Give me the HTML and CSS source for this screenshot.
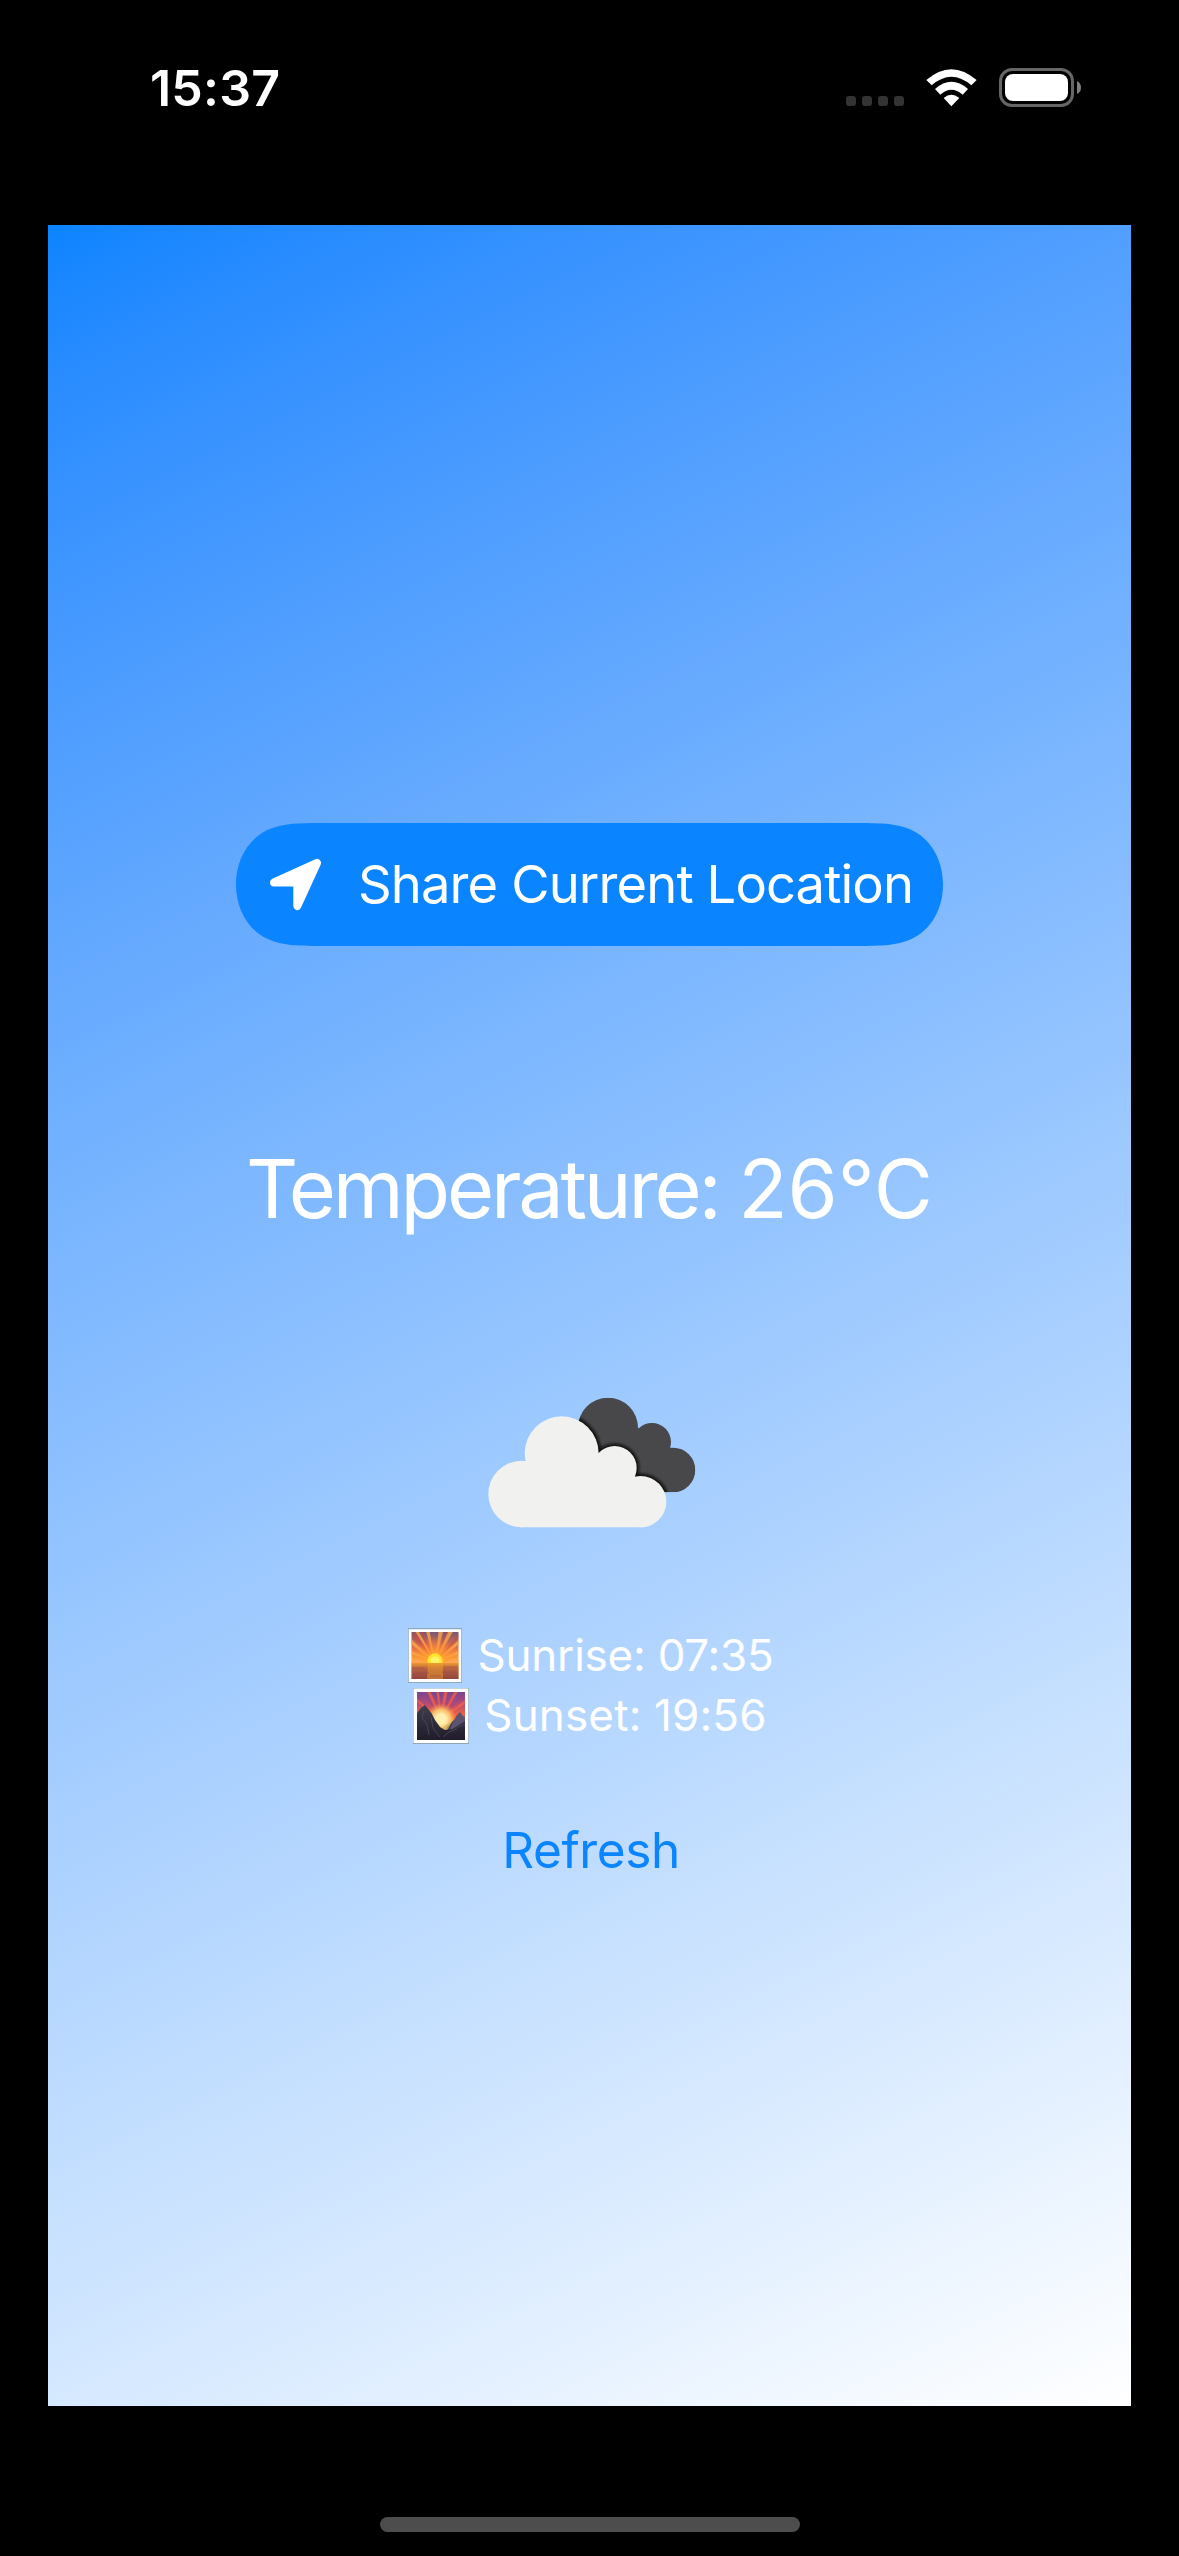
FILE: index.html
```html
<!DOCTYPE html>
<html lang="en">
<head>
<meta charset="utf-8">
<title>Weather</title>
<link rel="stylesheet" href="styles.css">
</head>
<body>
<header class="status">
  <span class="clock">15:37</span>
  <div class="indicators">
    <div class="signal"><i></i><i></i><i></i><i></i></div>
    <svg class="wifi" width="52" height="38" viewBox="318 56 156 114" fill="#fff">
      <path d="M319 89Q394 24 470 89L454 105Q394 54 335 105ZM345 116Q394 73 444 116L428 133Q394 104 361 133ZM371 143Q394 123 418 143L394 168Z"/>
    </svg>
    <svg class="battery" width="83" height="39" viewBox="0 0 83 39">
      <rect x="1.5" y="1.5" width="72" height="36" rx="11.5" fill="none" stroke="#666" stroke-width="3"/>
      <rect x="6" y="6" width="63" height="27" rx="8" fill="#fff"/>
      <path d="M78 13Q82 15 82 19.500Q82 24 78 26Z" fill="#808080"/>
    </svg>
  </div>
</header>

<main class="card">
  <button class="share">
    <svg class="arrow" width="54" height="54" viewBox="0 0 54 54">
      <path d="M5 24.500L48 5L28.300 48V24.500Z" fill="#fff" stroke="#fff" stroke-width="8" stroke-linejoin="round"/>
    </svg>
    <span class="share-label">Share Current Location</span>
  </button>

  <h1 class="temperature">Temperature: <span class="degrees">26°C</span></h1>

  <svg class="clouds" width="208" height="131" viewBox="54 50 624 393">
    <defs>
      <clipPath id="back">
        <circle cx="414" cy="142" r="90"/><circle cx="546" cy="185" r="57"/><circle cx="609" cy="269" r="67"/>
        <path d="M340 150L500 140L600 205V336H450Z"/>
      </clipPath>
      <filter id="soft" x="-10%" y="-10%" width="120%" height="120%"><feGaussianBlur stdDeviation="4"/></filter>
      <g id="front">
        <circle cx="155" cy="341" r="100"/><circle cx="275" cy="219" r="111"/>
        <circle cx="434" cy="263" r="66"/><circle cx="512" cy="364" r="77"/>
        <path d="M150 250H380L520 310V441H150Z"/>
      </g>
    </defs>
    <g clip-path="url(#back)">
      <path d="M300 40H690V350H300Z" fill="#48484a"/>
      <use href="#front" fill="#111" stroke="#111" stroke-width="14" filter="url(#soft)"/>
    </g>
    <use href="#front" fill="#f1f2f0"/>
  </svg>

  <div class="sun-times">
    <p class="sun-row sunrise">
      <svg width="54" height="55" viewBox="0 0 54 55">
        <defs>
          <linearGradient id="rise" x2="0" y2="1"><stop stop-color="#795772"/><stop offset=".35" stop-color="#e87343"/><stop offset=".65" stop-color="#ffb52e"/></linearGradient>
          <linearGradient id="sea" x2="0" y2="1"><stop stop-color="#ee9a2c"/><stop offset=".35" stop-color="#b76244"/><stop offset="1" stop-color="#93453d"/></linearGradient>
          <radialGradient id="glow"><stop stop-color="#ffe93a"/><stop offset=".4" stop-color="#ff9d32" stop-opacity=".75"/><stop offset="1" stop-color="#ff8038" stop-opacity="0"/></radialGradient>
          <clipPath id="sky"><path d="M3.500 4H50.500V36H3.500Z"/></clipPath>
        </defs>
        <path d="M0 0H54V55H0Z" fill="#8ba9bf"/><path d="M.7 1.200H53.200V54H.7Z" fill="#fff"/>
        <path d="M3.500 4H50.500V51H3.500Z" fill="url(#rise)"/>
        <g clip-path="url(#sky)">
          <path d="M27 34L0 14V8ZM27 34L6 2H10ZM27 34L17 0H21ZM27 34L31 0H36ZM27 34L41 2H46ZM27 34L54 9V14ZM27 34L0 25V21ZM27 34L54 21V25Z" fill="#ffac4b" opacity=".75"/>
          <path d="M27 34L4 8L7 4ZM27 34L12 3H15ZM27 34L38 3H40ZM27 34L51 6V9Z" fill="#d54440" opacity=".55"/>
          <circle cx="27" cy="33" r="24" fill="url(#glow)"/>
          <circle cx="27" cy="33" r="7.500" fill="#ffe529"/><circle cx="27" cy="33" r="4.500" fill="#fff36a"/>
          <path d="M3 33Q8 30 12 32L20 35H3ZM51 32Q46 29 42 32L34 35H51Z" fill="#ffa354"/>
        </g>
        <path d="M3.500 35H50.500V51H3.500Z" fill="url(#sea)"/>
        <path d="M20 35H35V51H19Z" fill="#f5a329" opacity=".45"/>
        <path d="M4 40H16M36 39H50M7 45H21M34 44H47M22 48H33" stroke="#8b4348" stroke-width=".7" opacity=".6"/>
      </svg>
      <span class="sun-label">Sunrise: 07:35</span>
    </p>
    <p class="sun-row sunset">
      <svg width="56" height="56" viewBox="0 0 56 56">
        <defs>
          <linearGradient id="dusk" x2="0" y2="1"><stop stop-color="#754594"/><stop offset=".25" stop-color="#b54c75"/><stop offset=".5" stop-color="#f4653d"/><stop offset="1" stop-color="#ffa33c"/></linearGradient>
          <radialGradient id="halo"><stop offset=".3" stop-color="#fff0b2"/><stop offset=".6" stop-color="#ffd071" stop-opacity=".85"/><stop offset="1" stop-color="#ff8738" stop-opacity="0"/></radialGradient>
          <linearGradient id="rock" x2="0" y2="1"><stop stop-color="#403e4d"/><stop offset="1" stop-color="#201c2a"/></linearGradient>
          <clipPath id="view"><path d="M4 4H52V52H4Z"/></clipPath>
        </defs>
        <path d="M0 0H56V56H0Z" fill="#91a5b8"/><path d="M.5 .5H55.300V55H.5Z" fill="#fff"/>
        <g clip-path="url(#view)">
          <path d="M4 4H52V52H4Z" fill="url(#dusk)"/>
          <path d="M28 31L14 4H18ZM28 31L23 2H26ZM28 31L31 3H35ZM28 31L42 2H46ZM28 31L4 14V11ZM28 31L52 12V16Z" fill="#ff633e" opacity=".7"/>
          <path d="M28 31L36 4H39ZM28 31L47 5L50 8ZM28 31L9 4H12Z" fill="#954384" opacity=".4"/>
          <circle cx="28" cy="31" r="16" fill="url(#halo)"/>
          <path d="M34 42L38 36L41 32L44 27L47 24L50 28L52 29V52H30Z" fill="#5a5471"/>
          <path d="M34 39L41 32L36 43L52 33V52H28Z" fill="#3b354a"/>
          <path d="M30 39L40 32L34 43L28 43Z" fill="#d3b86c" opacity=".75"/>
          <path d="M4 25L8 20L12 17L16 22L19 26L22 32L27 39L32 42L40 41L52 38V52H4Z" fill="url(#rock)"/>
          <path d="M11 23L9 30L14 36L16 47M18 29L20 40L27 49M44 41L36 44L30 49" fill="none" stroke="#565160" stroke-width="1" opacity=".7"/>
        </g>
      </svg>
      <span class="sun-label">Sunset: 19:56</span>
    </p>
  </div>

  <a class="refresh">Refresh</a>
</main>

<footer class="home"><div class="home-bar"></div></footer>
</body>
</html>
```

FILE: styles.css
```css
* { box-sizing: border-box; }

body {
  margin: 0;
  height: 2556px;
  overflow: hidden;
  background: #000;
  color: #fff;
  font-family: Inter, "Liberation Sans", sans-serif;
}

.status {
  display: flex;
  justify-content: space-between;
  align-items: flex-start;
  height: 225px;
  padding: 58px 97px 0 150px;
}

.clock {
  font-size: 50px;
  font-weight: 600;
  line-height: 60px;
  letter-spacing: 0.2px;
}

.indicators {
  display: flex;
  align-items: flex-end;
  padding-top: 10px;
}

.signal {
  display: flex;
  gap: 6px;
  margin: 0 22px 1px 0;
}

.signal i {
  width: 10px;
  height: 10px;
  border-radius: 3px;
  background: #333;
}

.wifi { margin-right: 21px; }

.card {
  display: flex;
  flex-direction: column;
  align-items: center;
  width: 1083px;
  height: 2181px;
  margin-left: 48px;
  padding-top: 598px;
  background: linear-gradient(153.6deg in oklab, #0a84ff, #fff);
}

.share {
  display: flex;
  align-items: center;
  width: 707px;
  height: 123px;
  padding: 0 0 0 33px;
  border: 0;
  background: #0a84ff;
  color: inherit;
  font: inherit;
  clip-path: path("M0 61.5C0 35 14 12 38 4.500C52 0 66 0 95 0H612C641 0 655 0 669 4.500C693 12 707 35 707 61.500C707 88 693 111 669 118.500C655 123 641 123 612 123H95C66 123 52 123 38 118.500C14 111 0 88 0 61.500Z");
}

.share-label {
  margin-left: 35px;
  padding-bottom: 2px;
  font-size: 52.500px;
  line-height: 64px;
  letter-spacing: -0.88px;
  white-space: nowrap;
}

.temperature {
  margin: 193px 0 0;
  font-size: 81px;
  font-weight: 400;
  line-height: 100px;
  letter-spacing: -3.2px;
  white-space: nowrap;
}

.degrees { letter-spacing: 0; }

.clouds { margin: 158px 0 0 4px; }

.sun-times {
  margin-top: 97px;
  font-size: 44px;
}

.sun-row {
  display: flex;
  justify-content: center;
  align-items: center;
  gap: 16px;
  height: 61px;
  margin: 0;
  white-space: nowrap;
}

.sun-label { padding-bottom: 2px; }

.sunrise {
  padding-left: 2px;
  letter-spacing: -0.22px;
}

.sunset {
  gap: 15px;
  padding: 0 0 2px 1px;
  letter-spacing: 0.15px;
}

.refresh {
  margin: 73px 0 0 3px;
  color: #0a84ff;
  font-size: 49.500px;
  line-height: 60px;
  letter-spacing: -0.4px;
}

.home {
  display: flex;
  justify-content: center;
  padding-top: 111px;
}

.home-bar {
  width: 420px;
  height: 15px;
  border-radius: 8px;
  background: #4d4d4d;
}
```
